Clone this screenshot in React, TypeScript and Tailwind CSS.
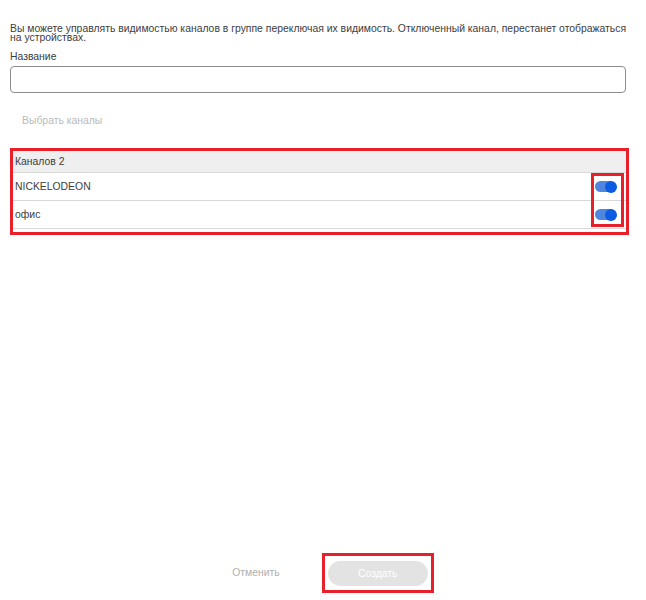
import React, { useState } from 'react';

const channels = [
  { id: 1, name: 'NICKELODEON' },
  { id: 2, name: 'офис' },
];

const Toggle: React.FC<{ on: boolean; onClick: () => void }> = ({ on, onClick }) => (
  <button onClick={onClick} className="relative w-[22px] h-[14px] flex items-center">
    <span className={`block w-[20px] h-[11px] rounded-full ${on ? 'bg-[#4f86e0]' : 'bg-gray-300'}`} />
    <span
      className={`absolute top-[1px] w-[12px] h-[12px] rounded-full ${on ? 'left-[10px] bg-[#0b5be3]' : 'left-0 bg-gray-100'}`}
    />
  </button>
);

export default function App() {
  const [state, setState] = useState<Record<number, boolean>>({ 1: true, 2: true });

  return (
    <div
      className="w-[646px] h-[600px] bg-white flex flex-col text-[#3d3d3d]"
      style={{ fontFamily: '"Liberation Sans", Arial, sans-serif' }}
    >
      <div className="px-[10px] pt-[24px]">
        <p className="text-[10.4px] leading-[9px]">
          Вы можете управлять видимостью каналов в группе переключая их видимость. Отключенный канал, перестанет отображаться на устройствах.
        </p>
        <div className="mt-[7px] text-[10.4px]">Название</div>
        <input className="mt-[1px] w-[616px] h-[27px] border border-[#8d8d8d] rounded-[4px] outline-none px-2 text-[10px]" />
        <div className="mt-[20px] pl-[12px] text-[10.4px] text-[#bababa]">Выбрать каналы</div>
      </div>

      <div className="relative mt-[20px] mx-[10px] w-[619px] border-[3px] border-[#e8202a]">
        <div className="h-[22px] bg-[#efefef] border-b border-[#d8d8d8] flex items-center px-[2px] text-[10.4px]">
          Каналов 2
        </div>
        {channels.map(ch => (
          <div key={ch.id} className="h-[28px] border-b border-[#d8d8d8] flex items-center justify-between pl-[2px] pr-[9px] text-[10.4px]">
            <span>{ch.name}</span>
            <Toggle on={state[ch.id]} onClick={() => setState(s => ({ ...s, [ch.id]: !s[ch.id] }))} />
          </div>
        ))}
        <div className="h-[3px]" />
        <div className="absolute right-[2px] top-[22px] w-[33px] h-[54px] border-[3px] border-[#e8202a] pointer-events-none" />
      </div>

      <div className="flex-1" />

      <div className="flex items-center justify-center gap-[42px] pb-[7px] pl-[20px]">
        <button className="text-[10.4px] text-[#b0b0b0]">Отменить</button>
        <div className="border-[3px] border-[#e8202a] px-[3px] py-[4px]">
          <button className="w-[100px] h-[25px] rounded-full bg-[#e3e3e3] text-white text-[10.4px]">Создать</button>
        </div>
      </div>
    </div>
  );
}
